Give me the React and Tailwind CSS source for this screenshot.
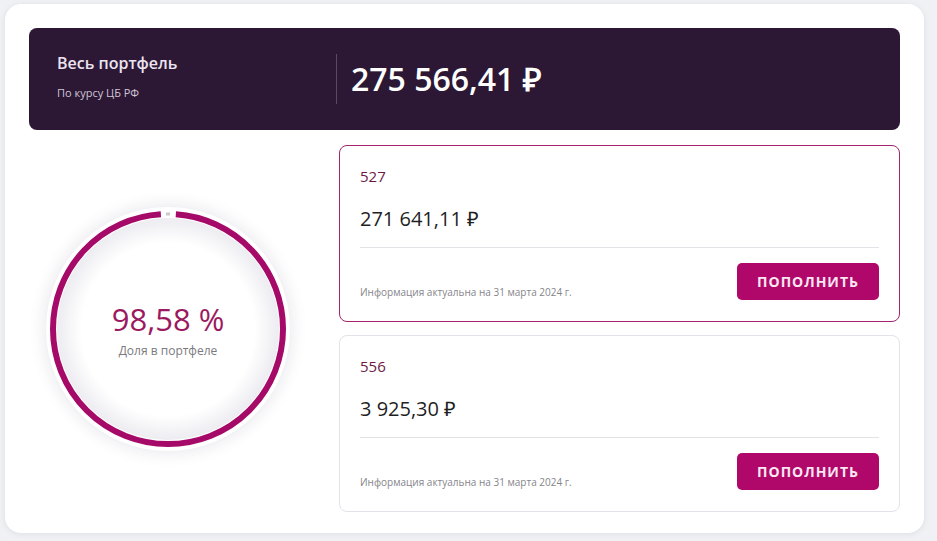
import React from "react";

const accounts = [
  { id: "527", amount: "271 641,11 ₽", active: true },
  { id: "556", amount: "3 925,30 ₽", active: false },
];

// ring around the share value
const ShareRing = ({ percent }) => {
  const r = 115;
  const c = 2 * Math.PI * r;
  const gap = 16;
  return (
    <div className="relative w-[244px] h-[244px] rounded-full bg-white shadow-[0_0_18px_rgba(30,20,60,0.12)] flex items-center justify-center">
      <svg
        width="244"
        height="244"
        viewBox="0 0 244 244"
        className="absolute inset-0"
      >
        <defs>
          <radialGradient id="inner" cx="50%" cy="50%" r="50%">
            <stop offset="78%" stopColor="#ffffff" />
            <stop offset="100%" stopColor="#ececf1" />
          </radialGradient>
        </defs>
        <circle cx="122" cy="122" r="111" fill="url(#inner)" />
        <circle
          cx="122"
          cy="122"
          r={r}
          fill="none"
          stroke="#a50a68"
          strokeWidth="6"
          strokeDasharray={`${c - gap} ${gap}`}
          strokeDashoffset={-gap / 2}
          transform="rotate(-90 122 122)"
        />
        <line x1="120" y1="7" x2="124" y2="7" stroke="#c9c9cf" strokeWidth="3" />
      </svg>
      <div className="relative flex flex-col items-center">
        <div className="text-[31px] leading-[40px] text-[#9b1a5f]">{percent}</div>
        <div className="text-[12px] leading-[16px] text-[#7a7a80] mt-[4px]">
          Доля в портфеле
        </div>
      </div>
    </div>
  );
};

const AccountCard = ({ id, amount, active }) => (
  <div
    className={`rounded-[8px] border bg-white px-[20px] pt-[20px] pb-[21px] ${
      active ? "border-[#a3236e]" : "border-[#e2e3e8]"
    }`}
  >
    <div className="text-[15px] leading-[20px] text-[#6b1a45]">{id}</div>
    <div className="mt-[19px] text-[20px] leading-[28px] text-[#1f1f24]">{amount}</div>
    <div className="mt-[14px] h-px bg-[#e3e3e7]" />
    <div className="mt-[15px] flex items-end justify-between">
      <div className="text-[10px] leading-[14px] text-[#85858b] mb-px">
        Информация актуальна на 31 марта 2024 г.
      </div>
      <button
        type="button"
        className="w-[142px] h-[37px] rounded-[5px] bg-[#b0086a] text-[#fbe6f2] text-[14px] font-bold tracking-[1px]"
      >
        ПОПОЛНИТЬ
      </button>
    </div>
  </div>
);

export default function App() {
  return (
    <div className="w-[937px] h-[541px] bg-[#eff1f4] pt-[4px] pl-[5px] font-['Open_Sans',sans-serif]">
      <div className="w-[919px] h-[529px] rounded-[16px] bg-white shadow-[0_1px_6px_rgba(20,30,60,0.08)] p-[24px]">
        {/* header banner */}
        <div className="h-[102px] rounded-[8px] bg-[#2c1834] flex items-center">
          <div className="w-[307px] pl-[28px] pb-[6px] flex flex-col">
            <div className="text-[16px] leading-[22px] font-semibold text-[#ece4f2]">
              Весь портфель
            </div>
            <div className="mt-[11px] text-[11px] leading-[16px] text-[#cfc6d6]">
              По курсу ЦБ РФ
            </div>
          </div>
          <div className="h-[50px] border-l border-[#5b4862] pl-[14px] flex items-center">
            <div className="text-[32px] leading-[40px] font-semibold text-white">
              275 566,41 ₽
            </div>
          </div>
        </div>

        <div className="mt-[15px] flex">
          <div className="w-[310px] flex items-center pl-[17px]">
            <ShareRing percent="98,58 %" />
          </div>
          <div className="flex-1 flex flex-col gap-[13px]">
            {accounts.map((a) => (
              <AccountCard key={a.id} {...a} />
            ))}
          </div>
        </div>
      </div>
    </div>
  );
}
